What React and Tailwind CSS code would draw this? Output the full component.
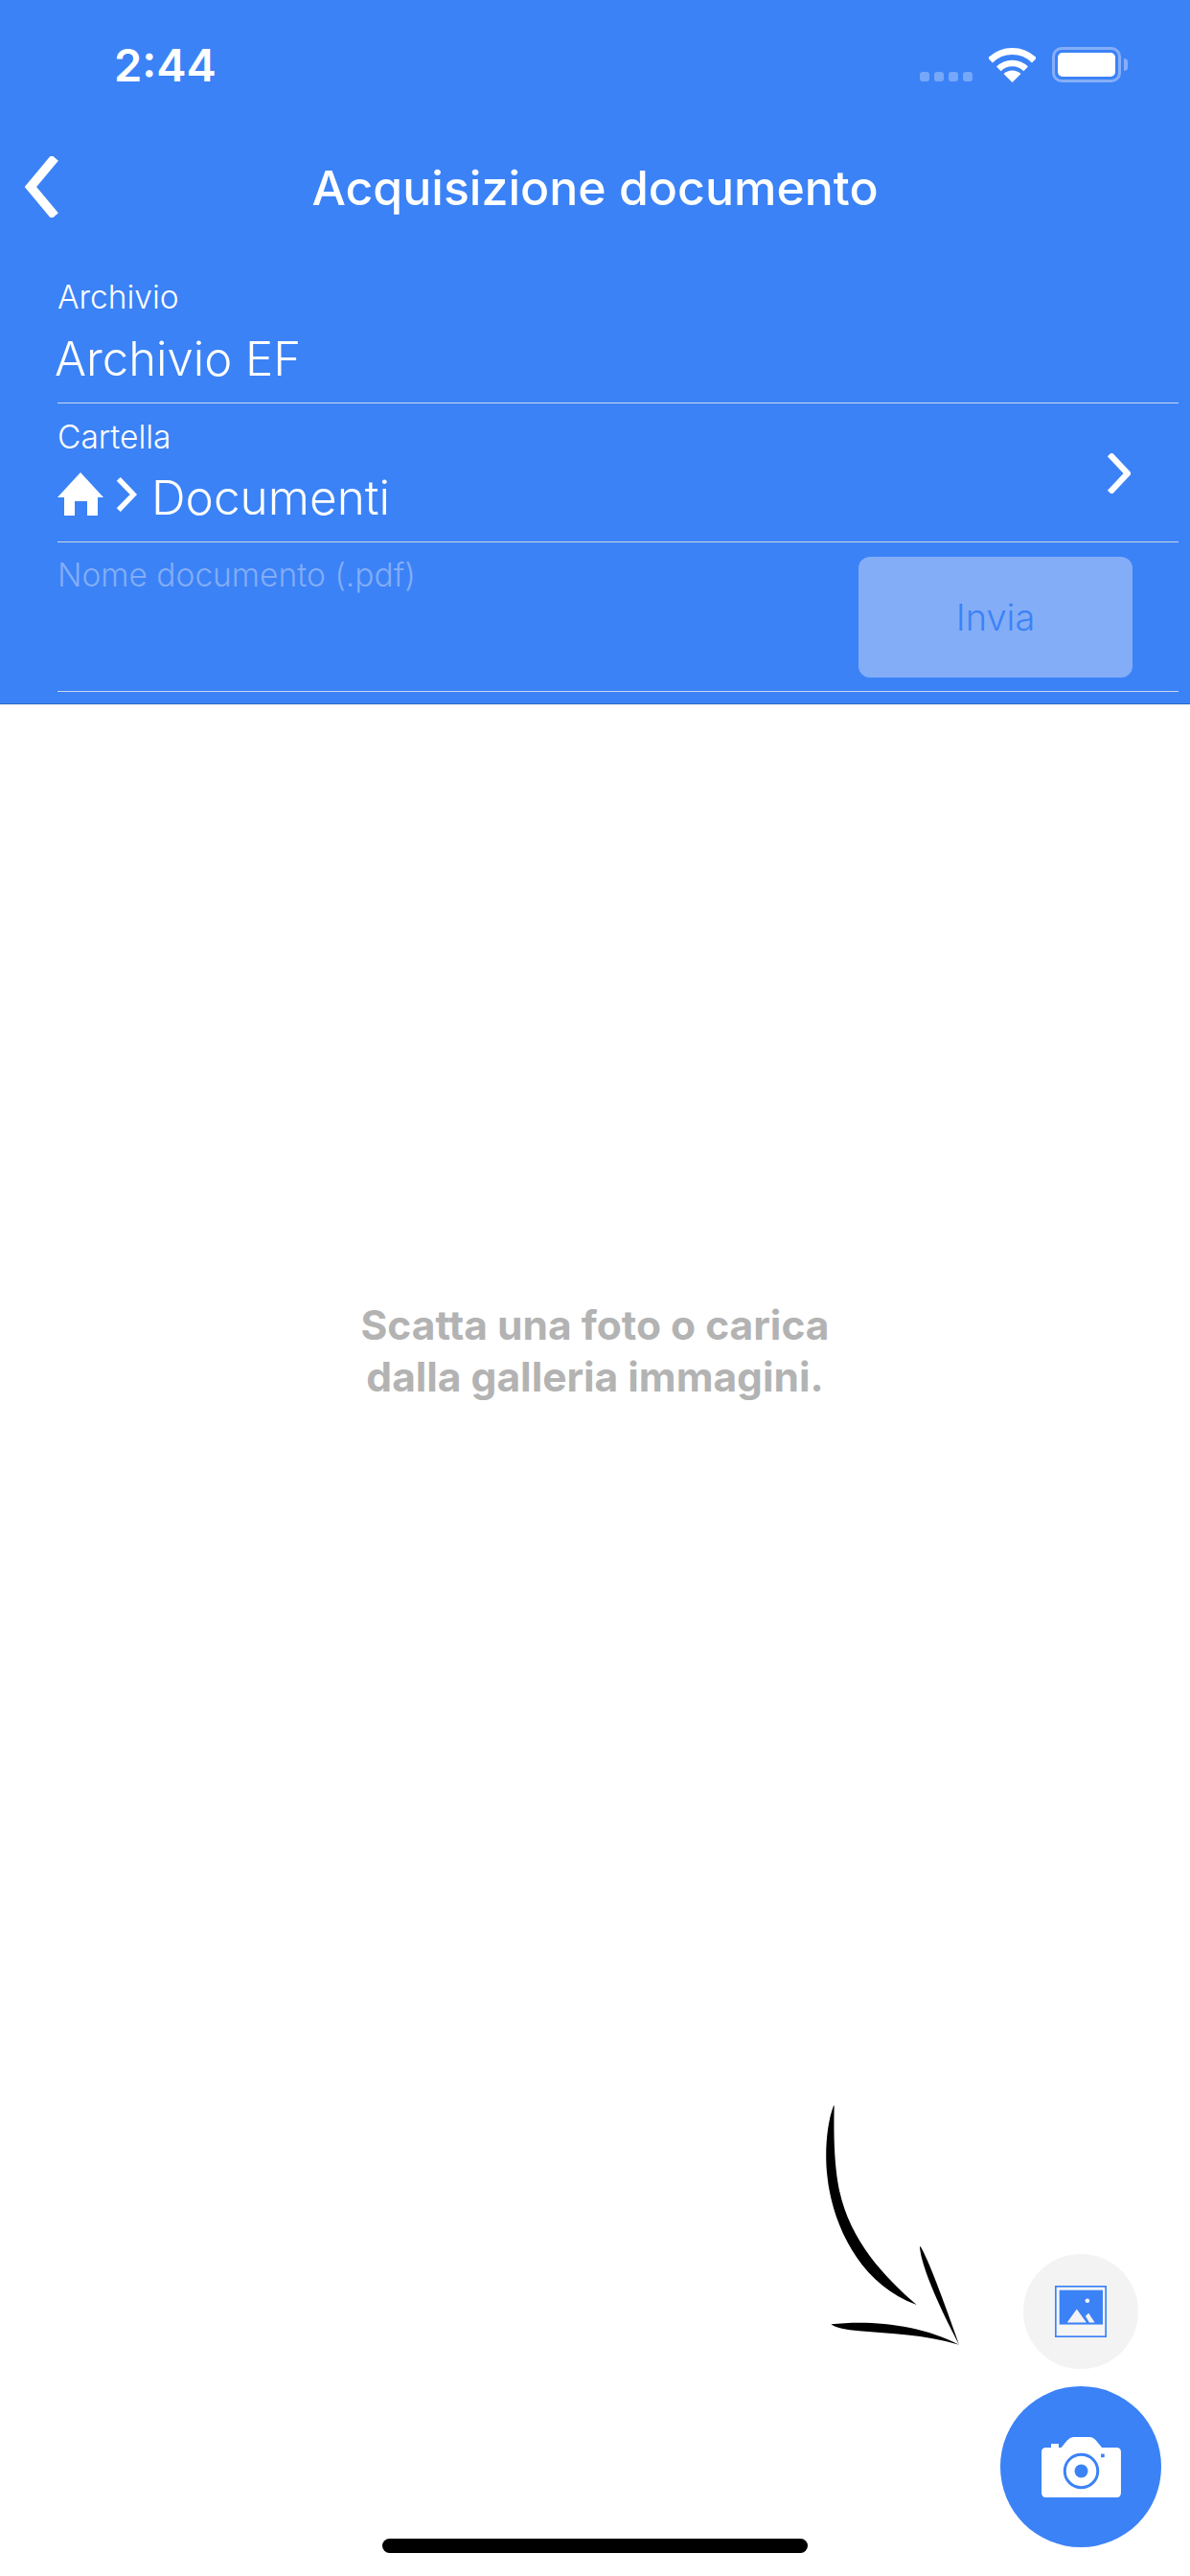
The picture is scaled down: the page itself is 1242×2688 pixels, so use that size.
import React from "react";

const F = "font-['Inter',sans-serif]";

function Chevron({ className, points = "5,2 19,20 5,38", w = 5 }) {
  return (
    <svg viewBox="0 0 24 40" className={className} preserveAspectRatio="none">
      <polyline points={points} fill="none" stroke="#fff" strokeWidth={w} />
    </svg>
  );
}

function Wifi() {
  const arc = (r) => {
    const d = r * Math.SQRT1_2;
    return `M${24.5 - d} ${36 - d}A${r} ${r} 0 0 1 ${24.5 + d} ${36 - d}`;
  };
  return (
    <svg viewBox="0 0 49 36" className="w-[49px] h-[36px]">
      <path d={arc(32.5)} fill="none" stroke="#fff" strokeWidth="7" />
      <path d={arc(20)} fill="none" stroke="#fff" strokeWidth="6.5" />
      <path d="M24.5 36L15.5 27A13 13 0 0 1 33.5 27Z" fill="#fff" />
    </svg>
  );
}

function StatusBar() {
  return (
    <div className="h-[135px] pl-[119px] pr-[65px] pt-[49px] flex justify-between items-start">
      <span className={`${F} text-[47px] leading-[37px] font-semibold text-white`}>2:44</span>
      <div className="flex items-end">
        <div className="flex gap-[5px] mb-[1px]">
          <div className="w-[10px] h-[10px] rounded-[3px] bg-white/30" />
          <div className="w-[10px] h-[10px] rounded-[3px] bg-white/30" />
          <div className="w-[10px] h-[10px] rounded-[3px] bg-white/30" />
          <div className="w-[10px] h-[10px] rounded-[3px] bg-white/30" />
        </div>
        <div className="ml-[17px]"><Wifi /></div>
        <div className="ml-[17px] w-[72px] h-[37px] rounded-[10px] border-[3px] border-[#86AEF9] p-[3px]">
          <div className="w-full h-full rounded-[5px] bg-white" />
        </div>
        <div className="ml-[3px] mb-[12px] w-[4px] h-[13px] rounded-r-full bg-[#86AEF9]" />
      </div>
    </div>
  );
}

function Label({ children }) {
  return <div className={`${F} text-[33.5px] leading-[40px] font-light text-white`}>{children}</div>;
}

function Arrow() {
  return (
    <svg viewBox="0 0 1266 1554" className="absolute right-0 bottom-0 w-[422px] h-[518px] pointer-events-none">
      <path fill="#000" d="M150 82C128 140 122 230 130 300C145 450 230 640 410 705C300 610 190 490 163 320C152 250 150 170 152 82Z" />
      <path fill="#000" d="M422 522C445 560 490 680 543 830C490 730 425 590 420 525Z" />
      <path fill="#000" d="M142 766C260 752 420 765 543 830C430 797 330 797 230 787C190 784 155 777 142 766Z" />
    </svg>
  );
}

export default function App() {
  return (
    <div className="relative w-[1242px] h-[2688px] overflow-hidden bg-white flex flex-col">
      <header className="bg-[#3B82F6] h-[735px] border-b border-[#2F68C5] shrink-0">
        <StatusBar />
        <div className="h-[124px] relative flex items-center justify-center">
          <Chevron className="absolute left-[24px] top-[28px] w-[38px] h-[64px]" points="21,1 5,20 21,39" w={6} />
          <h1 className={`${F} text-[50px] leading-[56px] font-medium text-white mt-[-2px]`}>Acquisizione documento</h1>
        </div>
        <div className="ml-[60px] mr-[12px]">
          <div className="h-[162px] border-b border-[#C9D6EE] pt-[31px]">
            <Label>Archivio</Label>
            <div className={`${F} text-[49px] leading-[60px] font-light text-white mt-[15px] ml-[-3px]`}>Archivio EF</div>
          </div>
          <div className="h-[145px] border-b border-[#C9D6EE] pt-[15px] relative">
            <Label>Cartella</Label>
            <div className="flex items-center mt-[13px]">
              <svg viewBox="0 0 48 45" className="w-[48px] h-[45px] mb-[7px]">
                <path fill="#fff" d="M24 0L48 26H42V45H31V30H18V45H7V26H0Z" />
              </svg>
              <Chevron className="ml-[13px] w-[22px] h-[36px] mb-[6px]" points="3,2 20,20 3,38" w={6} />
              <span className={`${F} text-[49.5px] leading-[60px] font-light text-white ml-[15px]`}>Documenti</span>
            </div>
            <Chevron className="absolute right-[50px] top-[52px] w-[25px] h-[42px]" points="3,1 21,20 3,39" w={6} />
          </div>
          <div className="h-[156px] border-b border-[#C9D6EE] flex justify-between items-start pt-[14px]">
            <span className={`${F} text-[33.5px] leading-[40px] font-light text-[#84ADF7]`}>Nome documento (.pdf)</span>
            <button className={`${F} w-[286px] h-[126px] mr-[48px] mt-[1px] rounded-[12px] bg-[#84ADF7] text-[#3B82F6] text-[38px] font-light`}>Invia</button>
          </div>
        </div>
      </header>
      <main className="flex-1 flex justify-center">
        <p className={`${F} mt-[621px] text-center text-[#B3B3B3] text-[42.5px] leading-[54px] font-bold`}>
          Scatta una foto o carica
          <br />
          dalla galleria immagini.
        </p>
      </main>
      <Arrow />
      <div className="absolute right-[54px] bottom-[216px] w-[120px] h-[120px] rounded-full bg-[#F3F3F3] flex items-center justify-center">
        <svg viewBox="843 645 161 161" className="w-[54px] h-[54px]">
          <rect x="845.5" y="647.5" width="156" height="156" fill="#F5F5F5" stroke="#3B82F6" strokeWidth="5" />
          <rect x="857" y="659" width="135" height="107" fill="#3B82F6" />
          <path fill="#F3F3F3" d="M881 760L911 718L941 760Z M938 740L948 731L967 760H950Z" />
          <circle cx="944" cy="692" r="7" fill="#F3F3F3" />
        </svg>
      </div>
      <div className="absolute right-[30px] bottom-[30px] w-[168px] h-[168px] rounded-full bg-[#3B82F6] flex items-center justify-center">
        <svg viewBox="798 1115 250 190" className="w-[83px] h-[63px]">
          <path fill="#fff" d="M828 1148V1136H852V1148H860L878 1126Q888 1115 898 1115H950Q960 1115 968 1124L988 1148H1034Q1048 1148 1048 1162V1290Q1048 1305 1034 1305H812Q798 1305 798 1290V1162Q798 1148 812 1148Z" />
          <circle cx="923" cy="1222" r="52" fill="none" stroke="#3B82F6" strokeWidth="9" />
          <circle cx="923" cy="1222" r="21" fill="#3B82F6" />
          <rect x="985" y="1168" width="11" height="11" fill="#3B82F6" />
        </svg>
      </div>
      <div className="absolute left-[399px] bottom-[24px] w-[444px] h-[15px] rounded-full bg-black" />
    </div>
  );
}
